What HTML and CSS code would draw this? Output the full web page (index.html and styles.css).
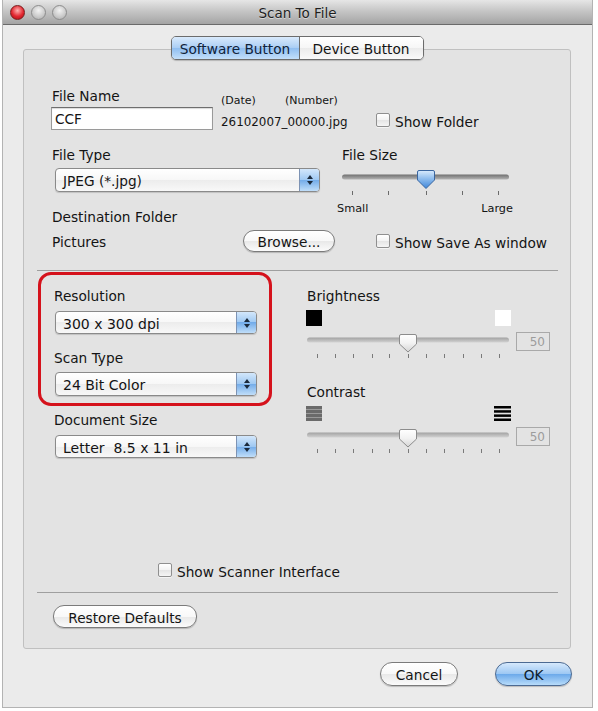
FILE: index.html
```html
<!DOCTYPE html>
<html>
<head>
<meta charset="utf-8">
<title>Scan To File</title>
<link rel="stylesheet" href="styles.css">
</head>
<body>
<div class="window">
  <div class="titlebar">
    <div class="lights"><span class="light red"></span><span class="light"></span><span class="light"></span></div>
    <div class="title">Scan To File</div>
    <div></div>
  </div>

  <div class="panel">
    <div class="tabs"><span class="tab on">Software Button</span><span class="tab">Device Button</span></div>

    <div class="top">
      <div class="row row-a">
        <div class="col-name">
          <div class="label">File Name</div>
          <div class="textfield">CCF</div>
        </div>
        <div class="col-date">
          <div class="small-line"><span class="date">(Date)</span><span>(Number)</span></div>
          <div class="small-line filename">26102007_00000.jpg</div>
        </div>
        <div class="check check-folder"><span class="box"></span><span class="ctext">Show Folder</span></div>
      </div>

      <div class="row row-b">
        <div class="col-type">
          <div class="label">File Type</div>
          <div class="popup popup-type"><span class="ptext">JPEG (*.jpg)</span><span class="stepper"><svg width="10" height="14" viewBox="0 0 10 14"><path d="M2 6 L5 2 L8 6 Z M2 8 L5 12 L8 8 Z" fill="#1b2a3c"/></svg></span></div>
          <div class="label dest">Destination Folder</div>
        </div>
        <div class="col-size">
          <div class="label">File Size</div>
          <svg class="slider-size" width="172" height="32" viewBox="0 0 172 32">
            <defs>
              <linearGradient id="trk" x1="0" y1="0" x2="0" y2="1"><stop offset="0" stop-color="#6f6f6f"/><stop offset="1" stop-color="#b4b4b4"/></linearGradient>
              <linearGradient id="thB" x1="0" y1="0" x2="0" y2="1"><stop offset="0" stop-color="#d9ebfd"/><stop offset="0.45" stop-color="#8fbdee"/><stop offset="1" stop-color="#3d85d8"/></linearGradient>
            </defs>
            <rect x="1" y="7.5" width="167" height="5" rx="2.5" fill="url(#trk)"/>
            <path d="M76.5 5 Q76.5 3.5 78 3.5 H92 Q93.5 3.5 93.5 5 V13 L85 21.5 L76.5 13 Z" fill="url(#thB)" stroke="#3a66a0"/>
            <g stroke="#6b6b6b" stroke-width="1">
              <line x1="11.5" y1="24" x2="11.5" y2="28"/><line x1="47.5" y1="24" x2="47.5" y2="28"/><line x1="85.5" y1="24" x2="85.5" y2="28"/><line x1="121.5" y1="24" x2="121.5" y2="28"/><line x1="157.5" y1="24" x2="157.5" y2="28"/>
            </g>
          </svg>
          <div class="scale"><span>Small</span><span>Large</span></div>
        </div>
      </div>

      <div class="row row-d">
        <div class="label pictures">Pictures</div>
        <div class="btn browse">Browse...</div>
        <div class="check check-save"><span class="box"></span><span class="ctext">Show Save As window</span></div>
      </div>
    </div>

    <div class="sep sep-1"></div>

    <div class="lower">
      <div class="lower-left">
        <div class="redbox">
          <div class="label">Resolution</div>
          <div class="popup popup-res"><span class="ptext">300 x 300 dpi</span><span class="stepper"><svg width="10" height="14" viewBox="0 0 10 14"><path d="M2 6 L5 2 L8 6 Z M2 8 L5 12 L8 8 Z" fill="#1b2a3c"/></svg></span></div>
          <div class="label scan-label">Scan Type</div>
          <div class="popup popup-scan"><span class="ptext">24 Bit Color</span><span class="stepper"><svg width="10" height="14" viewBox="0 0 10 14"><path d="M2 6 L5 2 L8 6 Z M2 8 L5 12 L8 8 Z" fill="#1b2a3c"/></svg></span></div>
        </div>
        <div class="docsize">
          <div class="label">Document Size</div>
          <div class="popup popup-doc"><span class="ptext">Letter&nbsp; 8.5 x 11 in</span><span class="stepper"><svg width="10" height="14" viewBox="0 0 10 14"><path d="M2 6 L5 2 L8 6 Z M2 8 L5 12 L8 8 Z" fill="#1b2a3c"/></svg></span></div>
        </div>
      </div>

      <div class="lower-right">
        <div class="label">Brightness</div>
        <div class="swatches"><span class="sw black"></span><span class="sw white"></span></div>
        <div class="slider-row">
          <svg width="205" height="29" viewBox="0 0 205 29">
            <defs>
              <linearGradient id="trk2" x1="0" y1="0" x2="0" y2="1"><stop offset="0" stop-color="#a2a2a2"/><stop offset="1" stop-color="#d2d2d2"/></linearGradient>
              <linearGradient id="thG" x1="0" y1="0" x2="0" y2="1"><stop offset="0" stop-color="#ffffff"/><stop offset="0.5" stop-color="#f2f2f2"/><stop offset="1" stop-color="#d4d4d4"/></linearGradient>
            </defs>
            <rect x="1" y="7.5" width="202" height="5" rx="2.5" fill="url(#trk2)"/>
            <path d="M93.5 6 Q93.5 4.5 95 4.5 H109 Q110.5 4.5 110.5 6 V14 L102 22 L93.5 14 Z" fill="url(#thG)" stroke="#8c8c8c"/>
            <g stroke="#7a7a7a" stroke-width="1">
              <line x1="11.5" y1="24" x2="11.5" y2="28"/><line x1="29.5" y1="24" x2="29.5" y2="28"/><line x1="47.5" y1="24" x2="47.5" y2="28"/><line x1="66.5" y1="24" x2="66.5" y2="28"/><line x1="83.5" y1="24" x2="83.5" y2="28"/><line x1="102.5" y1="24" x2="102.5" y2="28"/><line x1="120.5" y1="24" x2="120.5" y2="28"/><line x1="138.5" y1="24" x2="138.5" y2="28"/><line x1="157.5" y1="24" x2="157.5" y2="28"/><line x1="175.5" y1="24" x2="175.5" y2="28"/><line x1="193.5" y1="24" x2="193.5" y2="28"/>
            </g>
          </svg>
          <div class="valbox">50</div>
        </div>

        <div class="label contrast">Contrast</div>
        <div class="swatches icons">
          <svg width="16" height="16" viewBox="0 0 16 16"><g fill="#6a6a6a"><rect x="0" y="1" width="16" height="3"/><rect x="0" y="5" width="16" height="3"/><rect x="0" y="9" width="16" height="3"/><rect x="0" y="13" width="16" height="3"/></g><g fill="#9a9a9a"><rect x="0" y="4" width="16" height="1"/><rect x="0" y="8" width="16" height="1"/><rect x="0" y="12" width="16" height="1"/></g></svg>
          <svg width="17" height="16" viewBox="0 0 17 16"><g fill="#000"><rect x="0" y="1" width="17" height="2.5"/><rect x="0" y="5.2" width="17" height="2.5"/><rect x="0" y="9.4" width="17" height="2.5"/><rect x="0" y="13.5" width="17" height="2.5"/></g></svg>
        </div>
        <div class="slider-row">
          <svg width="205" height="29" viewBox="0 0 205 29">
            <rect x="1" y="7.5" width="202" height="5" rx="2.5" fill="url(#trk2)"/>
            <path d="M93.5 6 Q93.5 4.5 95 4.5 H109 Q110.5 4.5 110.5 6 V14 L102 22 L93.5 14 Z" fill="url(#thG)" stroke="#8c8c8c"/>
            <g stroke="#7a7a7a" stroke-width="1">
              <line x1="11.5" y1="24" x2="11.5" y2="28"/><line x1="29.5" y1="24" x2="29.5" y2="28"/><line x1="47.5" y1="24" x2="47.5" y2="28"/><line x1="66.5" y1="24" x2="66.5" y2="28"/><line x1="83.5" y1="24" x2="83.5" y2="28"/><line x1="102.5" y1="24" x2="102.5" y2="28"/><line x1="120.5" y1="24" x2="120.5" y2="28"/><line x1="138.5" y1="24" x2="138.5" y2="28"/><line x1="157.5" y1="24" x2="157.5" y2="28"/><line x1="175.5" y1="24" x2="175.5" y2="28"/><line x1="193.5" y1="24" x2="193.5" y2="28"/>
            </g>
          </svg>
          <div class="valbox">50</div>
        </div>
      </div>
    </div>

    <div class="check scanner"><span class="box"></span><span class="ctext">Show Scanner Interface</span></div>

    <div class="sep sep-2"></div>

    <div class="btn restore">Restore Defaults</div>
  </div>

  <div class="actions">
    <div class="btn cancel">Cancel</div>
    <div class="btn ok">OK</div>
  </div>
</div>
</body>
</html>
```

FILE: styles.css
```css
* { box-sizing: border-box; }
html, body { margin: 0; padding: 0; background: #ffffff; }
body {
  font-family: "DejaVu Sans", "Liberation Sans", sans-serif;
  font-size: 13.7px;
  color: #141414;
}

.window {
  margin-left: 2px;
  width: 591px;
  height: 708px;
  background: #ebebeb;
  border: 1px solid #b3b3b3;
  border-top: none;
}

.titlebar {
  height: 25px;
  display: grid;
  grid-template-columns: 1fr auto 1fr;
  align-items: center;
  background: linear-gradient(#e6e6e6, #c6c6c6 45%, #a4a4a4);
  border-bottom: 1px solid #6a6a6a;
}
.lights { display: flex; gap: 6px; padding-left: 7px; }
.light {
  width: 15px; height: 15px; border-radius: 50%;
  background: radial-gradient(circle at 50% 35%, #f2f2f2, #c9c9c9 60%, #a9a9a9);
  border: 1px solid #8d8d8d;
}
.light.red {
  background: radial-gradient(circle at 50% 35%, #ffb0b0, #e2262f 55%, #a80d14);
  border-color: #7c1c1c;
}
.title { font-size: 13.5px; padding-top: 1px; color: #1f1f1f; text-shadow: 0 1px 0 rgba(255,255,255,0.5); }

.panel {
  margin: 24px 0 0 20px;
  width: 548px;
  height: 600px;
  border: 1px solid #c0c0c0;
  border-radius: 3px;
  background: #e3e3e3;
}

.tabs {
  display: flex;
  width: fit-content;
  margin: -14px auto 0;
  height: 24px;
  border: 1px solid #6c6c6c;
  border-radius: 5px;
  overflow: hidden;
  box-shadow: 0 1px 1px rgba(0,0,0,0.2);
}
.tab {
  display: flex; align-items: center; justify-content: center;
  height: 22px;
  padding-top: 2px;
  background: linear-gradient(#ffffff, #f6f6f6 50%, #ebebeb 50%, #fafafa);
  color: #141414;
}
.tab.on {
  width: 128px;
  background: linear-gradient(#d9eafc, #a9cdf4 50%, #8ebdf0 50%, #c3dffa);
  border-right: 1px solid #6c6c6c;
  color: #10233a;
}
.tab:not(.on) { width: 123px; }

.label { height: 16px; line-height: 19px; white-space: nowrap; }

.top { padding-left: 28px; }
.row { display: flex; }

.row-a { margin-top: 27px; }
.col-name { width: 169px; }
.textfield {
  margin: 4px 0 0 -1px;
  width: 162px;
  height: 23px;
  line-height: 23px;
  padding-left: 3px;
  background: #fff;
  border: 1px solid #9a9a9a;
  border-top-color: #6e6e6e;
  box-shadow: inset 0 1px 1px rgba(0,0,0,0.15);
}
.col-date { width: 155px; }
.small-line { font-size: 11.8px; line-height: 14px; height: 14px; margin-top: 7px; white-space: nowrap; }
.small-line.filename { margin-top: 7px; font-size: 11.9px; }
.date { display: inline-block; width: 64px; font-size: 11px; }
.small-line:first-child { font-size: 11px; }

.check { display: flex; align-items: center; height: 16px; white-space: nowrap; }
.ctext { line-height: 16px; padding-top: 4px; }
.box {
  width: 14px; height: 14px;
  margin-right: 5px;
  border: 1px solid #8f8f8f;
  border-radius: 2px;
  background: linear-gradient(#ffffff, #f3f3f3 50%, #e4e4e4 50%, #f5f5f5);
  box-shadow: 0 1px 0 rgba(255,255,255,0.6);
}
.check-folder { margin-top: 25px; }

.row-b { margin-top: 16px; }
.col-type { width: 289px; }
.popup {
  display: flex;
  align-items: stretch;
  height: 24px;
  border: 1px solid #8a8a8a;
  border-radius: 4px;
  overflow: hidden;
  background: linear-gradient(#ffffff, #f7f7f7 50%, #ececec 50%, #f8f8f8);
  box-shadow: 0 1px 1px rgba(0,0,0,0.15);
}
.ptext { flex: 1; padding-left: 7px; padding-top: 1px; line-height: 22px; white-space: nowrap; font-size: 14px; }
.popup-type .ptext { font-size: 13.7px; }
.stepper {
  width: 20px;
  display: flex; align-items: center; justify-content: center;
  border-left: 1px solid #7d93b4;
  background: linear-gradient(#d3e7fb, #9ec8f2 50%, #72abe9 50%, #c0def9);
}
.popup-type { margin: 6px 0 0 3px; width: 265px; }
.dest { margin-top: 16px; }

.col-size { width: 180px; }
.col-size .label { padding-left: 1px; }
.slider-size { display: block; margin-top: 5px; }
.scale {
  display: flex; justify-content: space-between;
  width: 176px; margin-left: -4px; margin-top: 2px;
  font-size: 11.3px; line-height: 16px; height: 16px;
}

.row-d { margin-top: 6px; align-items: center; height: 22px; }
.pictures { width: 191px; }
.btn {
  display: flex; align-items: center; justify-content: center;
  height: 22px;
  padding-top: 2px;
  border: 1px solid #7b7b7b;
  border-radius: 11px;
  background: linear-gradient(#ffffff, #f8f8f8 50%, #e8e8e8 50%, #fbfbfb);
  box-shadow: 0 1px 1px rgba(0,0,0,0.2);
  white-space: nowrap;
}
.browse { width: 92px; }
.check-save { margin-left: 41px; }

.sep { border-top: 1px solid #9f9f9f; height: 1px; }
.sep-1 { margin: 18px 12px 0 13px; }

.lower { display: flex; }
.lower-left { width: 248px; }
.redbox {
  margin: 1px 0 0 14px;
  width: 234px;
  height: 134px;
  border: 3px solid #d5121c;
  border-radius: 13px;
  padding: 12px 0 0 13px;
}
.popup-res { margin: 8px 0 0 1px; width: 202px; height: 23px; }
.scan-label { margin-top: 15px; }
.popup-scan { margin: 7px 0 0 1px; width: 202px; }
.docsize { margin: 5px 0 0 30px; }
.popup-doc { margin: 8px 0 0 1px; width: 202px; height: 23px; }

.lower-right { margin-left: 34px; padding-top: 16px; }
.lower-right .label { padding-left: 1px; }
.swatches { display: flex; justify-content: space-between; width: 205px; height: 16px; margin-top: 7px; }
.sw { width: 16px; height: 16px; }
.sw.black { background: #000; }
.sw.white { background: #fff; }
.slider-row { display: flex; align-items: flex-start; margin-top: 4px; }
.slider-row svg { display: block; }
.valbox {
  margin: 2px 0 0 5px;
  width: 34px; height: 19px;
  border: 1px solid #a9a9a9;
  color: #9c9c9c;
  font-size: 12px;
  line-height: 18px;
  text-align: right;
  padding-right: 4px;
}
.contrast { margin-top: 24px; }
.icons { margin-top: 6px; }

.scanner { margin: 104px 0 0 134px; }

.sep-2 { margin: 14px 12px 0 13px; }

.restore { margin: 12px 0 0 29px; width: 144px; height: 23px; }

.actions {
  display: flex;
  justify-content: flex-end;
  gap: 37px;
  margin-top: 13px;
  padding-right: 20px;
}
.cancel { width: 78px; height: 24px; border-radius: 12px; }
.ok {
  width: 77px; height: 24px; border-radius: 12px;
  border-color: #4c6a92;
  background: linear-gradient(#d6e9fc, #9cc7f3 50%, #6aa8ea 50%, #b8dcfa);
  color: #0e1c2c;
}
```
